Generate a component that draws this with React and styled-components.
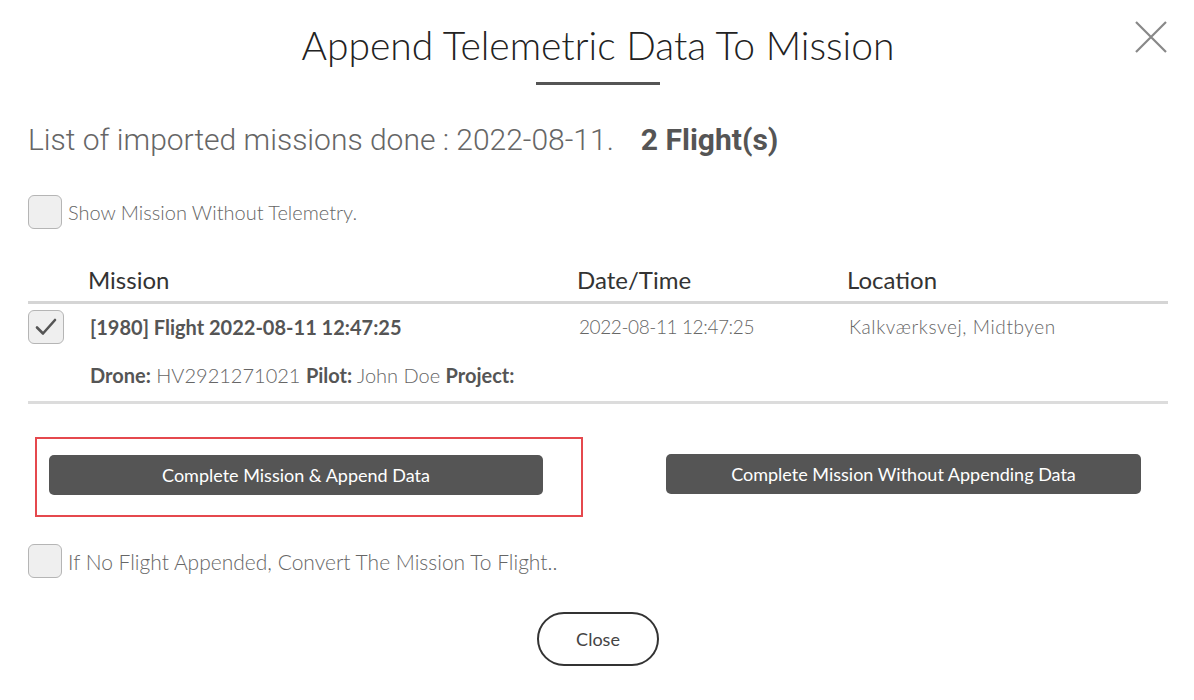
import React from 'react'
import styled, { createGlobalStyle } from 'styled-components'

const GlobalStyle = createGlobalStyle`
  html, body {
    margin: 0;
    padding: 0;
    background: #fff;
  }
  body {
    font-family: "Lato", "Noto Sans", sans-serif;
    color: #666;
  }
  * { box-sizing: border-box; }
`

const Modal = styled.div`
  position: relative;
  width: 1194px;
  height: 700px;
  padding: 0 26px 0 28px;
  display: flex;
  flex-direction: column;
`

const Header = styled.div`
  display: flex;
  flex-direction: column;
  align-items: center;
  padding-top: 22px;
`

const Title = styled.h1`
  margin: 0;
  font-size: 39px;
  font-weight: 300;
  line-height: 46px;
  color: #222;
`

const TitleRule = styled.div`
  width: 124px;
  height: 3px;
  background: #555;
  margin-top: 14px;
`

const CloseX = styled.button`
  position: absolute;
  top: 20px;
  right: 26px;
  width: 34px;
  height: 34px;
  padding: 0;
  border: none;
  background: none;
  cursor: pointer;
`

const Summary = styled.div`
  margin-top: 37px;
  font-family: "Roboto", sans-serif;
  font-weight: 300;
  font-size: 30px;
  line-height: 36px;
  color: #666;
  strong {
    font-weight: 700;
    color: #555;
    margin-left: 27px;
  }
`

const CheckRow = styled.label`
  display: flex;
  align-items: center;
  gap: 6px;
  margin-top: ${p => p.$top}px;
  font-size: ${p => p.$size}px;
  font-weight: 300;
  color: #666;
`

const Box = styled.span`
  width: ${p => p.$w || 34}px;
  height: 34px;
  flex: none;
  border: 1px solid #b5b5b5;
  border-radius: 6px;
  background: #efefef;
  display: flex;
  align-items: center;
  justify-content: center;
`

const Table = styled.div`
  margin-top: 36px;
  width: 1140px;
`

const Grid = styled.div`
  display: grid;
  grid-template-columns: 62px 489px 270px 1fr;
  align-items: center;
`

const HeadRow = styled(Grid)`
  grid-template-columns: 60px 489px 270px 1fr;
  border-bottom: 3px solid #d5d5d5;
  padding-bottom: 6px;
`

const HeadCell = styled.div`
  font-size: 24px;
  font-weight: 400;
  color: #333;
  line-height: 30px;
`

const BodyRow = styled.div`
  border-bottom: 3px solid #dcdcdc;
  padding: 6px 0 14px;
`

const Cell = styled.div`
  font-size: ${p => (p.$bold ? 20 : 19)}px;
  font-weight: ${p => (p.$bold ? 700 : 300)};
  letter-spacing: ${p => p.$ls || 0}px;
  color: ${p => (p.$bold ? '#555' : '#666')};
  line-height: 24px;
`

const Meta = styled.div`
  margin: 19px 0 0 62px;
  font-size: 20px;
  font-weight: 300;
  color: #666;
  line-height: 24px;
  b { font-weight: 700; color: #555; }
`

const Actions = styled.div`
  margin-top: 33px;
  display: flex;
  align-items: flex-start;
  padding-left: 7px;
`

const Highlight = styled.div`
  width: 548px;
  height: 80px;
  border: 2px solid #e5484d;
  padding: 16px 0 0 12px;
`

const DarkButton = styled.button`
  width: ${p => p.$w}px;
  height: 40px;
  border: none;
  border-radius: 5px;
  background: #555;
  color: #fff;
  font-family: "Lato", sans-serif;
  font-size: 18px;
  font-weight: 400;
  cursor: pointer;
  margin: ${p => p.$m || 0};
`

const Footer = styled.div`
  display: flex;
  justify-content: center;
  margin-top: 34px;
`

const CloseButton = styled.button`
  width: 122px;
  height: 54px;
  border: 2px solid #333;
  border-radius: 27px;
  background: #fff;
  color: #444;
  font-family: "Lato", sans-serif;
  font-size: 18px;
  font-weight: 400;
  cursor: pointer;
`

const Tick = () => (
  <svg width="24" height="24" viewBox="0 0 24 24" fill="none">
    <path d="M3 12.5l6 6L21 5" stroke="#555" strokeWidth="2.6" strokeLinecap="round" strokeLinejoin="round" />
  </svg>
)

export default function App() {
  return (
    <>
      <GlobalStyle />
      <Modal>
        <Header>
          <Title>Append Telemetric Data To Mission</Title>
          <TitleRule />
        </Header>
        <CloseX aria-label="close">
          <svg width="34" height="34" viewBox="0 0 34 34">
            <path d="M2 2L32 32M32 2L2 32" stroke="#888" strokeWidth="2.2" />
          </svg>
        </CloseX>

        <Summary>
          List of imported missions done : 2022-08-11.<strong>2 Flight(s)</strong>
        </Summary>

        <CheckRow $top={37} $size={20}>
          <Box />
          Show Mission Without Telemetry.
        </CheckRow>

        <Table>
          <HeadRow>
            <span />
            <HeadCell>Mission</HeadCell>
            <HeadCell>Date/Time</HeadCell>
            <HeadCell>Location</HeadCell>
          </HeadRow>
          <BodyRow>
            <Grid>
              <Box $w={36}>
                <Tick />
              </Box>
              <Cell $bold>[1980] Flight 2022-08-11 12:47:25</Cell>
              <Cell $ls={-0.4}>2022-08-11 12:47:25</Cell>
              <Cell $ls={0.6}>Kalkværksvej, Midtbyen</Cell>
            </Grid>
            <Meta>
              <b>Drone:</b> HV2921271021 <b>Pilot:</b> John Doe <b>Project:</b>
            </Meta>
          </BodyRow>
        </Table>

        <Actions>
          <Highlight>
            <DarkButton $w={494}>Complete Mission &amp; Append Data</DarkButton>
          </Highlight>
          <DarkButton $w={475} $m="17px 0 0 83px">Complete Mission Without Appending Data</DarkButton>
        </Actions>

        <CheckRow $top={27} $size={21}>
          <Box />
          If No Flight Appended, Convert The Mission To Flight..
        </CheckRow>

        <Footer>
          <CloseButton>Close</CloseButton>
        </Footer>
      </Modal>
    </>
  )
}
